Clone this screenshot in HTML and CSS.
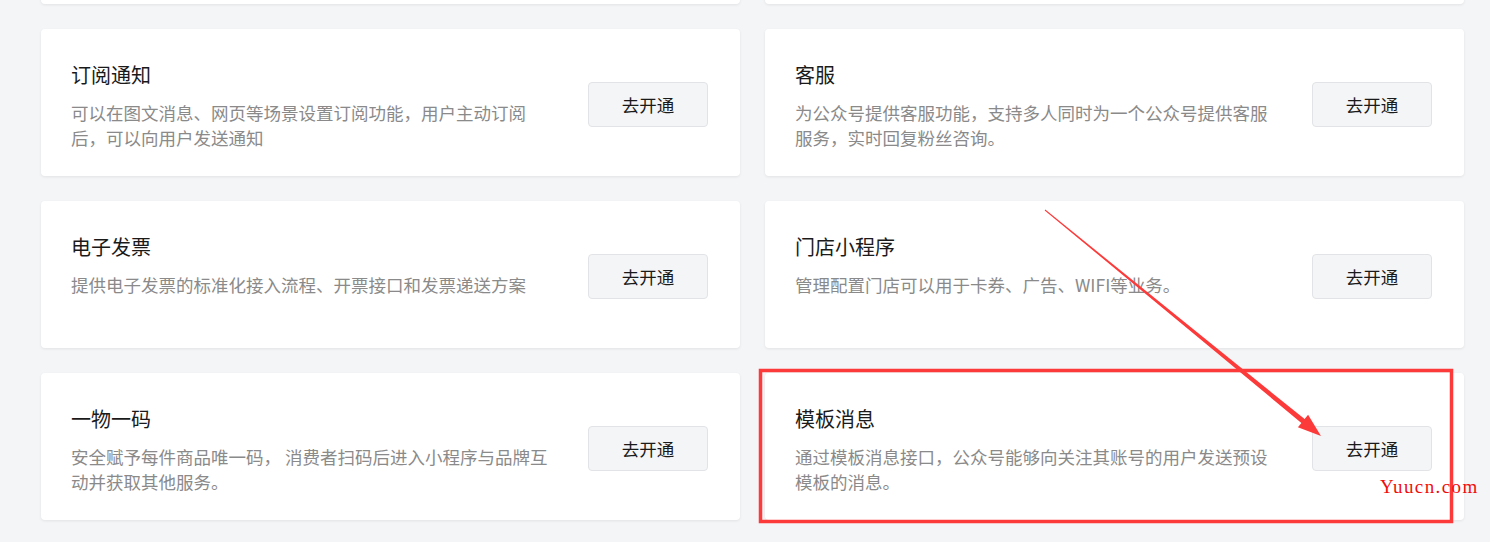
FILE: index.html
```html
<!DOCTYPE html>
<html lang="zh-CN">
<head>
  <meta charset="UTF-8" />
  <title>功能插件</title>
  <link rel="stylesheet" href="styles.css">
</head>
<body>
  <div class="plugin-list">
    <!-- previous row, scrolled mostly out of view -->
    <div class="card"></div>
    <div class="card"></div>

    <div class="card">
      <div class="card-info">
        <div class="card-title">订阅通知</div>
        <div class="card-desc">可以在图文消息、网页等场景设置订阅功能，用户主动订阅后，可以向用户发送通知</div>
      </div>
      <button class="open-btn">去开通</button>
    </div>
    <div class="card">
      <div class="card-info">
        <div class="card-title">客服</div>
        <div class="card-desc">为公众号提供客服功能，支持多人同时为一个公众号提供客服服务，实时回复粉丝咨询。</div>
      </div>
      <button class="open-btn">去开通</button>
    </div>

    <div class="card">
      <div class="card-info">
        <div class="card-title">电子发票</div>
        <div class="card-desc">提供电子发票的标准化接入流程、开票接口和发票递送方案</div>
      </div>
      <button class="open-btn">去开通</button>
    </div>
    <div class="card">
      <div class="card-info">
        <div class="card-title">门店小程序</div>
        <div class="card-desc">管理配置门店可以用于卡券、广告、WIFI等业务。</div>
      </div>
      <button class="open-btn">去开通</button>
    </div>

    <div class="card">
      <div class="card-info">
        <div class="card-title">一物一码</div>
        <div class="card-desc">安全赋予每件商品唯一码， 消费者扫码后进入小程序与品牌互动并获取其他服务。</div>
      </div>
      <button class="open-btn">去开通</button>
    </div>
    <div class="card">
      <div class="card-info">
        <div class="card-title">模板消息</div>
        <div class="card-desc">通过模板消息接口，公众号能够向关注其账号的用户发送预设模板的消息。</div>
      </div>
      <button class="open-btn">去开通</button>
    </div>
  </div>

  <!-- screenshot annotation -->
  <svg class="markup" width="1490" height="542" viewBox="0 0 1490 542">
    <rect x="760.5" y="370.5" width="691" height="151" fill="none" stroke="#fd3a3a" stroke-width="3.5"/>
    <polygon fill="#fd3a3a" points="1044.7,210.4 1045.3,209.6 1304.6,419.1 1308.1,414.8 1321,436 1297.9,427.2 1301.4,422.9"/>
  </svg>
  <div class="watermark">Yuucn.com</div>
</body>
</html>
```

FILE: styles.css
```css
* { margin: 0; padding: 0; box-sizing: border-box; }

body {
  background: #f4f5f7;
  font-family: "Noto Sans CJK SC", "Noto Sans", sans-serif;
  color: #1f1f1f;
  position: relative;
  height: 542px;
  overflow: hidden;
}

.plugin-list {
  display: grid;
  grid-template-columns: 1fr 1fr;
  gap: 25px;
  padding: 0 26px 0 41px;
  margin-top: -143px;
}

.card {
  background: #fff;
  height: 147px;
  border-radius: 4px;
  box-shadow: 0 1px 3px rgba(0, 0, 0, 0.08);
  display: flex;
  justify-content: space-between;
  align-items: center;
  padding: 0 32px 0 30px;
}

.card-info {
  align-self: flex-start;
  padding-top: 34px;
  width: 480px;
}

.card-title {
  font-size: 20px;
  line-height: 24px;
  color: #1a1a1a;
}

.card-desc {
  margin-top: 13px;
  font-size: 17.5px;
  line-height: 25px;
  color: #8a8a8a;
}

.open-btn {
  width: 120px;
  height: 45px;
  margin-top: 4px;
  background: #f4f5f7;
  border: 1px solid #e2e3e6;
  border-radius: 4px;
  font-family: inherit;
  font-size: 17.5px;
  color: #1a1a1a;
  cursor: pointer;
}

.markup {
  position: absolute;
  left: 0;
  top: 0;
  pointer-events: none;
}

.watermark {
  position: absolute;
  left: 1380px;
  top: 476px;
  font-family: "Liberation Serif", serif;
  font-size: 19px;
  letter-spacing: 1.4px;
  color: #f20d0d;
}
```
